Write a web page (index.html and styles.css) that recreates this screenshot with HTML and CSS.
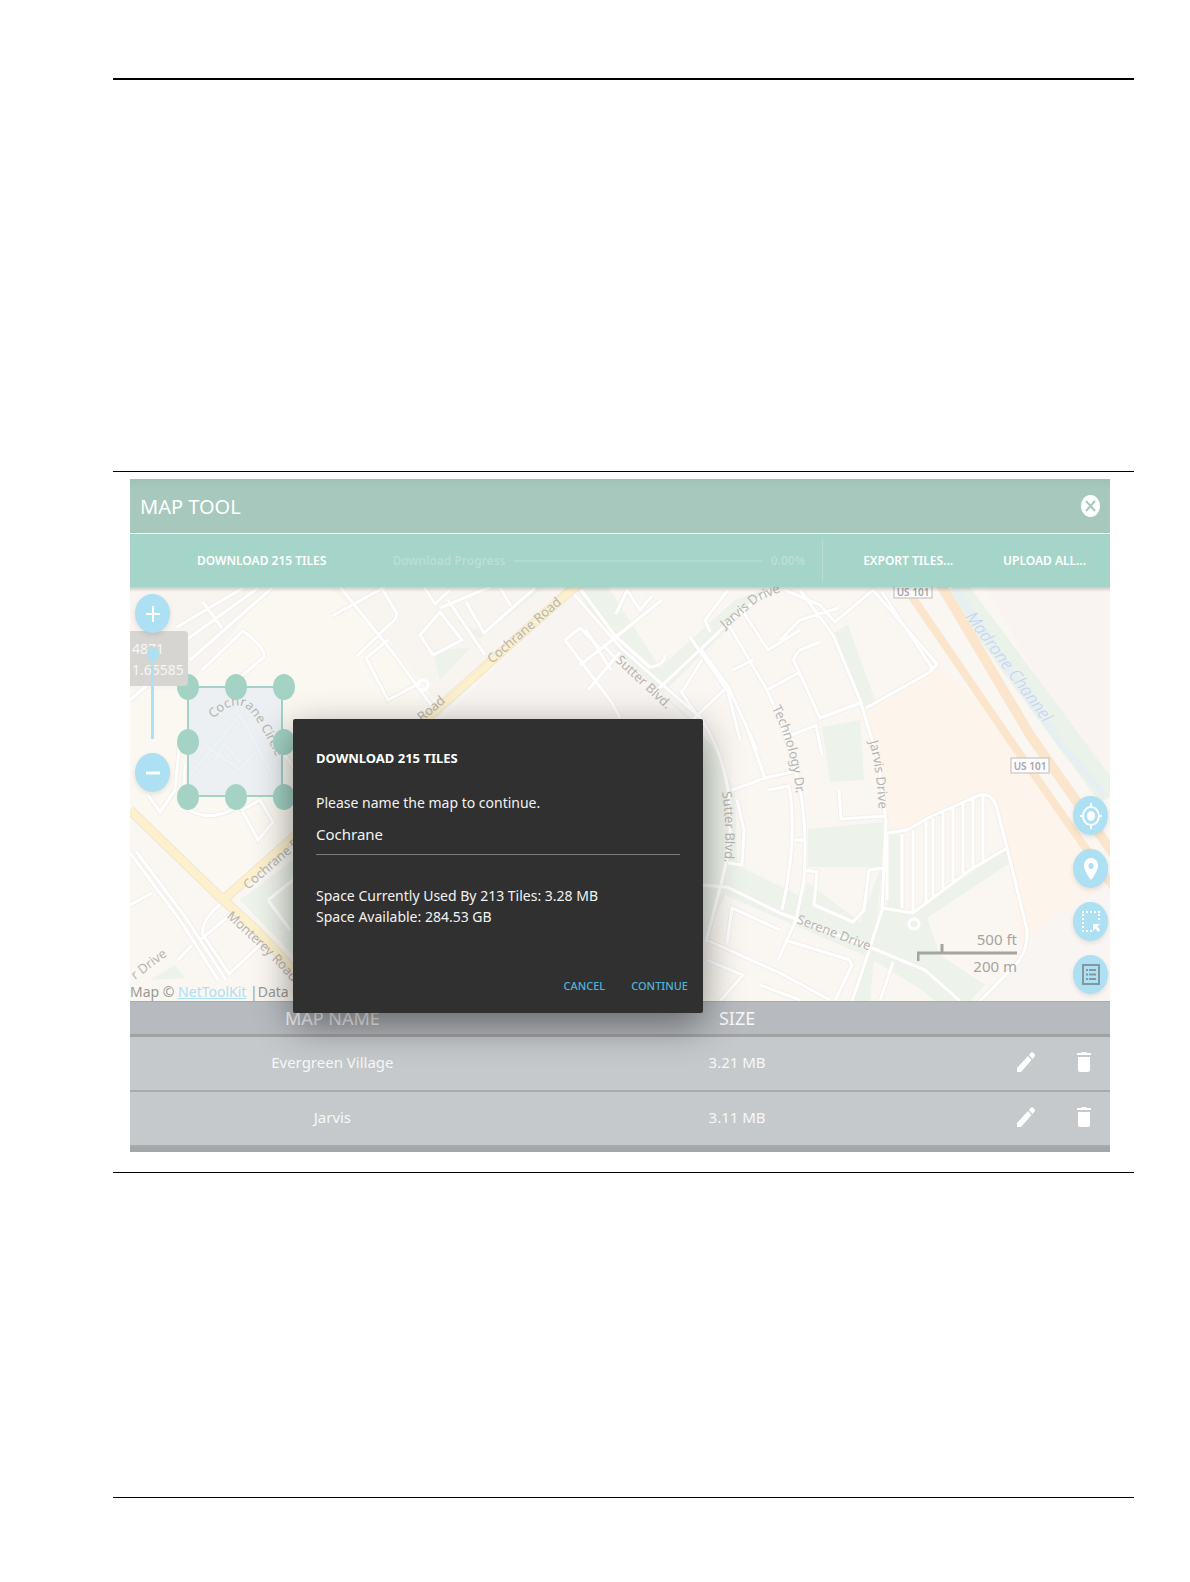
FILE: index.html
```html
<!DOCTYPE html>
<html lang="en">
<head>
  <meta charset="UTF-8">
  <meta name="viewport" content="width=device-width, initial-scale=1.0">
  <title>Map Tool</title>
  <link rel="stylesheet" href="styles.css">
</head>
<body>
  <div class="page">
    <div class="page-top"></div>

    <div class="figure">
      <div class="app">
        <header class="title-bar">
          <h1>MAP TOOL</h1>
          <button class="icon-button" aria-label="Close">
            <svg width="19" height="22" viewBox="0 0 19 22">
              <ellipse cx="9.5" cy="11" rx="9.5" ry="11" fill="#fff"/>
              <path d="M5 6 L14 16 M14 6 L5 16" stroke="#a6c8bd" stroke-width="2"/>
            </svg>
          </button>
        </header>

        <div class="toolbar">
          <button class="tool-button">DOWNLOAD 215 TILES</button>
          <div class="progress">
            <span>Download Progress</span>
            <div class="progress-line"></div>
            <span>0.00%</span>
          </div>
          <div class="tool-right">
            <button class="tool-button">EXPORT TILES...</button>
            <button class="tool-button">UPLOAD ALL...</button>
          </div>
        </div>

        <div class="map">
          <svg class="map-canvas" viewBox="130 587 980 414" preserveAspectRatio="xMidYMid slice">
            <defs>
              <path id="p-cochrane1" d="M492 664 L575 592"/>
              <path id="p-cochrane2" d="M422 722 L462 688"/>
              <path id="p-cochrane3" d="M248 890 L345 806"/>
              <path id="p-circle" d="M213 719 Q232 700 246 708 Q258 717 280 765"/>
              <path id="p-monterey" d="M226 917 L262 950 Q285 972 320 1015"/>
              <path id="p-sutter1" d="M615 661 L680 722"/>
              <path id="p-sutter2" d="M722 792 Q728 830 723 880"/>
              <path id="p-jarvis1" d="M725 629 L758 601 L800 584"/>
              <path id="p-jarvis2" d="M869 742 Q879 775 879 835"/>
              <path id="p-tech" d="M772 708 Q794 750 798 815"/>
              <path id="p-serene" d="M796 923 L880 955"/>
              <path id="p-drive" d="M135 980 L180 946"/>
              <path id="p-madrone" d="M965 617 L1080 772"/>
            </defs>

            <rect x="130" y="587" width="980" height="414" fill="#faf7f2"/>

            <!-- land -->
            <path d="M130 587 H573 L223 900 L130 810Z" fill="#fbf8f1"/>
            <path d="M130 587 H270 L185 690 H130Z M330 587 H570 L440 705 L395 650Z" fill="#f8f5f1"/>
            <path d="M573 593 L700 717 V740 H420Z" fill="#f8f4f1"/>
            <path d="M937 664 L1000 720 L1110 885 V980 H1025 L1007 848 L990 797 L885 833 L866 708Z" fill="#fdf5eb"/>
            <path d="M985 587 H1110 V800 L1090 770Z" fill="#f9f4f1"/>
            <path d="M1030 935 L1110 880 V1001 H985Z" fill="#f9f5f3"/>

            <!-- parks -->
            <g fill="#edf2ea">
              <path d="M575 587 H608 L660 668 L735 600 L770 587 L662 694 L712 745 L735 790 L737 865 L880 935 L960 1001 H940 L870 958 L725 895 L705 942 L697 935 V725 L620 655Z"/>
              <path d="M455 620 L480 638 L545 587 H535 L482 632Z M432 650 L470 648 L440 680Z"/>
              <path d="M822 727 L860 720 L864 780 L830 782Z"/>
              <path d="M808 829 L883 822 V867 H808Z"/>
              <path d="M887 835 L902 835 V908 L887 910Z"/>
              <path d="M833 633 L848 625 L876 703 L860 707Z"/>
              <path d="M882 910 L913 913 L1005 850 L1010 863 L927 918 L940 955 L985 985 L970 1001 H935 L873 950Z"/>
              <path d="M807 882 L860 922 L882 865 L870 1001 H850 L868 950 L798 922Z"/>
              <path d="M240 900 L293 860 V955Z"/>
              <path d="M150 980 L175 965 L185 978Z"/>
            </g>

            <!-- Madrone Channel -->
            <path d="M955 587 L1072 745 L1110 796" fill="none" stroke="#ebf2e9" stroke-width="24"/>
            <path d="M953 587 L1062 745 L1105 796" fill="none" stroke="#e6eff1" stroke-width="7"/>

            <!-- street casings and streets -->
            <g class="casing">
              <path id="streets" d="M177 627 L243 588 M182 643 L258 588 M190 660 L272 588 M203 602 L222 628 M202 670 L243 631 Q266 648 264 657 L225 690
                M130 700 L188 650 M340 587 L393 653 L437 713 M332 616 L385 587 M381 587 L396 612 Q399 617 390 624 L357 656 M366 658 L388 640 M366 658 L388 700 L418 684
                M424 587 L435 604 L450 590 M420 635 L440 612 L462 640 L433 655Z M440 608 L490 587 M448 600 L485 655 M466 602 L484 633 L535 588 M500 588 L511 606
                M573 593 L620 647 L657 680 L700 717 Q722 750 728 790 Q735 830 722 880 L706 942 M581 590 L615 636 L650 668
                M565 640 L580 628 L602 650 M565 640 L612 703 L620 718 M580 665 L612 640 L662 600 M586 630 L611 670 M588 690 L620 652 M603 645 L622 665 M616 614 L627 590 L640 610 L652 596
                M620 640 L650 667 Q665 665 665 655 M773 588 L735 617 L655 692 M728 590 L705 620 L710 632 M690 637 L728 692 L740 740 M727 622 L767 690 Q785 730 795 770 Q808 810 804 880 L796 920 L778 960
                M700 648 L728 686 L684 728 M728 686 L757 750 M682 692 L702 660 M680 690 L697 715 M742 610 L768 650 L800 630 M733 670 L753 660
                M800 590 L833 635 L860 700 L878 760 L886 820 L882 910 L866 960 L852 1001 M785 590 L820 605 L835 622 L873 590 L937 664 L930 672 L866 708
                M882 592 L932 668 M780 640 L800 620 L838 608 M796 665 Q790 660 800 650 L820 642 M796 665 L820 718 L860 703
                M767 690 L800 672 M787 737 L816 725 L822 755 M839 790 L841 819 L886 816 M768 790 L789 786 Q798 840 782 910 M794 840 L804 840 M804 870 L817 872 L814 905 L853 922 L864 910 L869 870 L885 868
                M700 885 L727 887 L780 913 L872 948 L925 970 L960 1001 M707 940 L780 973 L830 1000 M732 790 L765 778 L745 722 M737 800 L744 830 L742 865 L728 863 M765 778 L800 770
                M727 943 L732 908 L780 930 M707 960 L743 975 L720 1001 M760 985 L800 1000 M848 958 L852 965 L835 1001 M893 962 L880 1001 M785 940 L850 960
                M887 833 L907 830 L930 817 L980 795 Q992 793 996 805 L1007 848 L1027 930 Q1028 950 1018 962 L980 1001 M1007 848 L970 870 L913 913 L882 908 M887 833 L887 900
                M902 835 V908 M913 830 V912 M926 822 V904 M933 818 V898 M943 813 V892 M953 808 V884 M963 803 V873 M973 799 V868 M983 796 V862
                M180 740 L175 790 L160 812 L148 795 M185 765 L183 805 Q205 825 235 808 M190 775 L240 715 L275 780 M205 745 L240 770 L255 752 M213 762 L225 745 L240 762 M242 810 L258 840 L273 822 L260 800Z
                M245 700 L310 790 M130 853 L180 920 L218 980 M136 851 L186 918 L226 980 M130 905 L152 893 M178 960 L192 945 M223 902 Q200 920 203 935 L230 975 M230 915 L200 940 M228 975 L260 945 M268 900 L293 880 M268 900 L290 930"/>
            </g>
            <use href="#streets" class="street"/>
            <circle cx="423" cy="685" r="5" class="street"/>
            <circle cx="914" cy="924" r="5" class="street"/>

            <!-- main roads -->
            <path d="M580 582 L223 900 M130 810 L223 900 Q270 940 305 985" fill="none" stroke="#efe6d2" stroke-width="10"/>
            <path d="M580 582 L223 900 M130 810 L223 900 Q270 940 305 985" fill="none" stroke="#fcf0cd" stroke-width="8"/>
            <path d="M574 583 L440 704" fill="none" stroke="#f5e9cb" stroke-width="1"/>
            <path d="M904 585 L1010 740 L1115 890" fill="none" stroke="#fbe6cd" stroke-width="8"/>
            <path d="M938 580 L1030 735 L1115 856" fill="none" stroke="#fbe6cd" stroke-width="10"/>

            <g class="street-names">
              <text><textPath href="#p-cochrane1">Cochrane Road</textPath></text>
              <text><textPath href="#p-cochrane2">Road</textPath></text>
              <text><textPath href="#p-cochrane3">Cochrane Road</textPath></text>
              <text><textPath href="#p-monterey">Monterey Road</textPath></text>
              <text><textPath href="#p-sutter1">Sutter Blvd.</textPath></text>
              <text><textPath href="#p-sutter2">Sutter Blvd.</textPath></text>
              <text><textPath href="#p-jarvis1">Jarvis Drive</textPath></text>
              <text><textPath href="#p-jarvis2">Jarvis Drive</textPath></text>
              <text><textPath href="#p-tech">Technology Dr.</textPath></text>
              <text><textPath href="#p-serene">Serene Drive</textPath></text>
              <text><textPath href="#p-drive">r Drive</textPath></text>
              <text class="water-name"><textPath href="#p-madrone">Madrone Channel</textPath></text>
            </g>

            <g class="shield">
              <rect x="894" y="582" width="38" height="16"/>
              <text x="913" y="596">US 101</text>
              <rect x="1011" y="758" width="38" height="15"/>
              <text x="1030" y="770">US 101</text>
            </g>

            <!-- selected area -->
            <rect x="188" y="687" width="94" height="109" fill="#e6ecf2" fill-opacity="0.7" stroke="#a4d3c6" stroke-width="2"/>
            <g class="street-names">
              <text><textPath href="#p-circle">Cochrane Circle</textPath></text>
            </g>
            <g fill="#a4d3c6">
              <ellipse cx="188" cy="687" rx="11" ry="13"/>
              <ellipse cx="236" cy="687" rx="11" ry="13"/>
              <ellipse cx="284" cy="687" rx="11" ry="13"/>
              <ellipse cx="188" cy="742" rx="11" ry="13"/>
              <ellipse cx="284" cy="742" rx="11" ry="13"/>
              <ellipse cx="188" cy="797" rx="11" ry="13"/>
              <ellipse cx="236" cy="797" rx="11" ry="13"/>
              <ellipse cx="284" cy="797" rx="11" ry="13"/>
            </g>
          </svg>

          <div class="coords">4871<br>1.65585</div>

          <div class="zoom-controls">
            <button class="round-button" aria-label="Zoom in">
              <svg width="14" height="16" viewBox="0 0 14 16"><path d="M7 0 V16 M0 8 H14" stroke="#fff" stroke-width="2"/></svg>
            </button>
            <input class="zoom-slider" type="range" min="0" max="18" value="18" aria-label="Zoom level">
            <button class="round-button" aria-label="Zoom out">
              <svg width="14" height="16" viewBox="0 0 14 16"><path d="M0 8 H14" stroke="#fff" stroke-width="3"/></svg>
            </button>
          </div>

          <div class="map-buttons">
            <button class="round-button" aria-label="My location">
              <svg width="22" height="26" viewBox="0 0 22 26">
                <ellipse cx="11" cy="13" rx="8" ry="9" fill="none" stroke="#fff" stroke-width="2"/>
                <ellipse cx="11" cy="13" rx="4" ry="5" fill="#fff"/>
                <path d="M11 0 V4 M11 22 V26 M0 13 H3 M19 13 H22" stroke="#fff" stroke-width="2"/>
              </svg>
            </button>
            <button class="round-button" aria-label="Add marker">
              <svg width="14" height="22" viewBox="0 0 14 22">
                <path fill="#fff" fill-rule="evenodd" d="M7 0 C3 0 0 3 0 8 C0 13 7 22 7 22 S14 13 14 8 C14 3 11 0 7 0Z M7 5 A2.5 3 0 1 1 7 11 A2.5 3 0 1 1 7 5Z"/>
              </svg>
            </button>
            <button class="round-button" aria-label="Select area">
              <svg width="18" height="21" viewBox="0 0 18 21">
                <path d="M0 1 H18 M1 3 V21 M17 3 V11 M0 20 H10" fill="none" stroke="#fff" stroke-width="2" stroke-dasharray="2 2"/>
                <path d="M11 13 H18 L15.500 15.500 L18 19 L16 21 L13.500 17.500 L11 20Z" fill="#fff"/>
              </svg>
            </button>
            <button class="round-button" aria-label="Map list">
              <svg width="18" height="21" viewBox="0 0 18 21">
                <path d="M1 1 H17 V20 H1Z" fill="none" stroke="#84979f" stroke-width="2"/>
                <path d="M4 6 H6 M4 10.500 H6 M4 15 H6 M7 6 H14 M7 10.500 H14 M7 15 H14" stroke="#84979f" stroke-width="2"/>
              </svg>
            </button>
          </div>

          <div class="scale">
            <span>500 ft</span>
            <svg width="100" height="17" viewBox="0 0 100 17">
              <path d="M1 17 V9 H100 M25 9 V0" fill="none" stroke="#a5a4a0" stroke-width="3"/>
            </svg>
            <span>200 m</span>
          </div>

          <div class="attribution">Map © <a href="#">NetToolKit</a> |Data © OpenStreetMap</div>
        </div>

        <table class="map-table">
          <thead>
            <tr><th class="col-name">MAP NAME</th><th class="col-size">SIZE</th><th></th></tr>
          </thead>
          <tbody>
            <tr>
              <td>Evergreen Village</td>
              <td>3.21 MB</td>
              <td>
                <div class="actions">
                  <button class="row-button" aria-label="Edit Evergreen Village">
                    <svg width="18" height="20" viewBox="0 0 18 20"><path id="pencil" fill="#fff" d="M0 16 V20 H4 L14.500 8 L11 4 Z M12 3 L15.500 7 L17.500 4.800 Q18.500 3.500 17.500 2.300 L16 .6 Q14.900 -.4 13.900 .8Z"/></svg>
                  </button>
                  <button class="row-button" aria-label="Delete Evergreen Village">
                    <svg width="14" height="20" viewBox="0 0 14 20"><path id="trash" fill="#fff" d="M1 5 H13 V18 Q13 20 11 20 H3 Q1 20 1 18Z M0 1 H4 L5 0 H9 L10 1 H14 V3 H0Z"/></svg>
                  </button>
                </div>
              </td>
            </tr>
            <tr>
              <td>Jarvis</td>
              <td>3.11 MB</td>
              <td>
                <div class="actions">
                  <button class="row-button" aria-label="Edit Jarvis">
                    <svg width="18" height="20" viewBox="0 0 18 20"><use href="#pencil"/></svg>
                  </button>
                  <button class="row-button" aria-label="Delete Jarvis">
                    <svg width="14" height="20" viewBox="0 0 14 20"><use href="#trash"/></svg>
                  </button>
                </div>
              </td>
            </tr>
          </tbody>
        </table>

        <div class="dialog" role="dialog" aria-labelledby="dialogTitle">
          <h2 id="dialogTitle">DOWNLOAD 215 TILES</h2>
          <label for="mapName">Please name the map to continue.</label>
          <input type="text" id="mapName" value="Cochrane">
          <p>Space Currently Used By 213 Tiles: 3.28 MB<br>Space Available: 284.53 GB</p>
          <div class="dialog-buttons">
            <button>CANCEL</button>
            <button>CONTINUE</button>
          </div>
        </div>
      </div>
    </div>

    <div class="page-bottom"></div>
  </div>
</body>
</html>
```
FILE: styles.css
```css
* {
  box-sizing: border-box;
}

body {
  margin: 0;
  background-color: #ffffff;
  font-family: "Noto Sans", "Open Sans", sans-serif;
}

button {
  font-family: inherit;
  background: none;
  border: none;
  padding: 0;
  cursor: pointer;
}

.page {
  padding: 78px 56px 84px 113px;
}

.page-top {
  border-top: 2px solid #000000;
  height: 393px;
}

.page-bottom {
  margin-top: 324px;
  border-top: 1px solid #000000;
}

.figure {
  border-top: 1px solid #000000;
  border-bottom: 1px solid #000000;
  padding: 7px 24px 20px 17px;
}

.app {
  position: relative;
}

/* Title bar */
.title-bar {
  display: flex;
  align-items: center;
  justify-content: space-between;
  height: 55px;
  padding: 0 10px;
  background: linear-gradient(#a0c1b6, #a6c8bd 10px);
  border-bottom: 1px solid #ffffff;
}

.title-bar h1 {
  margin: 0;
  font-size: 20px;
  font-weight: 400;
  color: #ffffff;
}

.icon-button {
  display: flex;
}

/* Toolbar */
.toolbar {
  display: flex;
  align-items: center;
  height: 53px;
  padding: 0 24px 0 67px;
  background-color: #a4d5c8;
}

.tool-button {
  font-size: 12px;
  font-weight: 600;
  color: #ffffff;
  white-space: nowrap;
}

.progress {
  flex: 1;
  display: flex;
  align-items: center;
  gap: 9px;
  padding: 0 17px 0 66px;
  font-size: 12px;
  font-weight: 600;
  color: #b9dfd5;
}

.progress-line {
  flex: 1;
  height: 2px;
  background-color: #b0dcd4;
}

.tool-right {
  display: flex;
  align-items: center;
  gap: 50px;
  height: 41px;
  padding-left: 40px;
  border-left: 1px solid #b9dfd5;
}

/* Map */
.map {
  position: relative;
  height: 414px;
  overflow: hidden;
}

.map::before {
  content: "";
  position: absolute;
  top: 0;
  left: 0;
  right: 0;
  height: 5px;
  background: linear-gradient(rgba(0, 0, 0, 0.18), rgba(0, 0, 0, 0));
}

.map-canvas {
  display: block;
  width: 100%;
  height: 100%;
}

.casing {
  fill: none;
  stroke: #f1efec;
  stroke-width: 5;
}

.street {
  fill: none;
  stroke: #ffffff;
  stroke-width: 3;
}

.street-names {
  font-size: 13px;
  fill: #b9b5b0;
}

.street-names .water-name {
  font-size: 17px;
  font-style: italic;
  font-weight: 300;
  fill: #c3d3f0;
}

.shield rect {
  fill: #fdfcfa;
  stroke: #bdbcc0;
}

.shield text {
  font-size: 10px;
  font-weight: 600;
  fill: #a7a7ad;
  text-anchor: middle;
}

.coords {
  position: absolute;
  top: 44px;
  left: 0;
  padding: 7px 4px 6px 2px;
  border-radius: 0 4px 4px 0;
  background-color: #d6d5d2;
  color: #f7f7f6;
  font-size: 14px;
  line-height: 21px;
}

.zoom-controls {
  position: absolute;
  top: 7px;
  left: 5px;
  display: flex;
  flex-direction: column;
  align-items: center;
}

.round-button {
  display: flex;
  align-items: center;
  justify-content: center;
  width: 35px;
  height: 39px;
  border-radius: 50%;
  background-color: #ace0f2;
  box-shadow: 0 2px 5px rgba(0, 0, 0, 0.1);
}

.zoom-slider {
  appearance: none;
  writing-mode: vertical-lr;
  direction: rtl;
  width: 12px;
  height: 92px;
  margin: 14px 0;
  background: linear-gradient(#ace0f2, #ace0f2) center / 3px 100% no-repeat;
}

.zoom-slider::-webkit-slider-thumb {
  appearance: none;
  width: 12px;
  height: 14px;
  border-radius: 50%;
  background-color: #ace0f2;
}

.map-buttons {
  position: absolute;
  right: 2px;
  bottom: 7px;
  display: flex;
  flex-direction: column;
  gap: 14px;
}

.scale {
  position: absolute;
  right: 93px;
  bottom: 25px;
  display: flex;
  flex-direction: column;
  align-items: flex-end;
  color: #a5a4a0;
  font-size: 15px;
  line-height: 20px;
}

.scale svg {
  margin: -5px 0;
}

.attribution {
  position: absolute;
  left: 0;
  bottom: 0;
  color: #9b9a97;
  font-size: 14px;
  line-height: 18px;
  white-space: nowrap;
}

.attribution a {
  color: #ace0f2;
}

/* Table */
.map-table {
  width: 100%;
  table-layout: fixed;
  border-collapse: separate;
  border-spacing: 0;
  border-bottom: 5px solid #a4a6a7;
  color: #f7f8f8;
  text-align: center;
}

.map-table th {
  height: 36px;
  padding: 0;
  background-color: #b7babe;
  border-top: 1px solid #a7abac;
  border-bottom: 3px solid #a0a2a4;
  font-size: 18px;
  font-weight: 400;
  line-height: 32px;
}

.map-table .col-name,
.map-table .col-size {
  width: 41.3%;
}

.map-table td {
  height: 55px;
  padding: 0 0 3px;
  background-color: #c5c9cb;
  border-bottom: 2px solid #a7abac;
  font-size: 15px;
}

.actions {
  display: flex;
  justify-content: flex-end;
  gap: 6px;
}

.row-button {
  display: flex;
  justify-content: center;
  width: 52px;
}

/* Dialog */
.dialog {
  position: absolute;
  top: 240px;
  left: 163px;
  width: 410px;
  padding: 28px 15px 15px 23px;
  border-radius: 2px;
  background-color: #303030;
  box-shadow: 0 12px 38px rgba(0, 0, 0, 0.45);
  color: #f2f2f2;
  font-size: 14px;
}

.dialog h2 {
  margin: 0 0 24px;
  font-size: 13px;
  font-weight: 700;
  line-height: 22px;
  color: #ffffff;
}

.dialog label {
  display: block;
  line-height: 20px;
}

.dialog input {
  display: block;
  width: 364px;
  height: 42px;
  padding: 0;
  border: none;
  border-bottom: 1px solid #7a7a7a;
  background: none;
  color: #f2f2f2;
  font-family: inherit;
  font-size: 15px;
}

.dialog p {
  margin: 30px 0 47px;
  line-height: 21px;
}

.dialog-buttons {
  display: flex;
  justify-content: flex-end;
  gap: 26px;
}

.dialog-buttons button {
  color: #4fb3d9;
  font-size: 11px;
  font-weight: 500;
  line-height: 24px;
}
```
